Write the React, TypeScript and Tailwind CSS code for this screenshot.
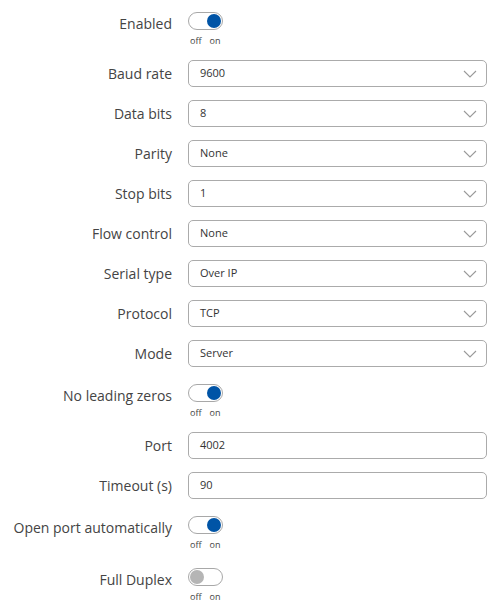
import { useState } from 'react';

type Row =
  | { kind: 'toggle'; label: string; on: boolean }
  | { kind: 'select'; label: string; value: string }
  | { kind: 'input'; label: string; value: string };

const rows: Row[] = [
  { kind: 'toggle', label: 'Enabled', on: true },
  { kind: 'select', label: 'Baud rate', value: '9600' },
  { kind: 'select', label: 'Data bits', value: '8' },
  { kind: 'select', label: 'Parity', value: 'None' },
  { kind: 'select', label: 'Stop bits', value: '1' },
  { kind: 'select', label: 'Flow control', value: 'None' },
  { kind: 'select', label: 'Serial type', value: 'Over IP' },
  { kind: 'select', label: 'Protocol', value: 'TCP' },
  { kind: 'select', label: 'Mode', value: 'Server' },
  { kind: 'toggle', label: 'No leading zeros', on: true },
  { kind: 'input', label: 'Port', value: '4002' },
  { kind: 'input', label: 'Timeout (s)', value: '90' },
  { kind: 'toggle', label: 'Open port automatically', on: true },
  { kind: 'toggle', label: 'Full Duplex', on: false },
];

function Toggle({ initial }: { initial: boolean }) {
  const [on, setOn] = useState(initial);
  return (
    <div className="flex flex-col pt-[4px]">
      <button
        type="button"
        onClick={() => setOn(!on)}
        className={`flex h-[18px] w-[35px] items-center rounded-full border border-[#a8a8a8] bg-white px-[1px] ${
          on ? 'justify-end' : 'justify-start'
        }`}
      >
        <span
          className={`block h-[14px] w-[14px] rounded-full ${on ? 'bg-[#0054a6]' : 'bg-[#b5b5b5]'}`}
        />
      </button>
      <div className="mt-[4px] flex h-[13px] items-center gap-[8px] pl-[2px] text-[9px] leading-none text-[#444]">
        <span>off</span>
        <span>on</span>
      </div>
    </div>
  );
}

function Chevron() {
  return (
    <svg width="14" height="8" viewBox="0 0 14 8" className="shrink-0">
      <path d="M1 1 L7 7 L13 1" fill="none" stroke="#999" strokeWidth="1.1" />
    </svg>
  );
}

export default function App() {
  return (
    <div
      className="min-h-screen w-[500px] bg-white pt-[8px] text-[#404040]"
      style={{ fontFamily: '"Open Sans", "Noto Sans", Arial, sans-serif' }}
    >
      <div className="flex flex-col gap-[13px]">
        {rows.map((r) => (
          <div key={r.label} className="flex items-start gap-[16px]">
            <div
              className={`w-[172px] shrink-0 text-right text-[14px] leading-[20px] text-[#444] ${
                r.kind === 'toggle' ? 'pt-[6px]' : 'pt-[4px]'
              }`}
            >
              {r.label}
            </div>
            {r.kind === 'toggle' && <Toggle initial={r.on} />}
            {r.kind === 'select' && (
              <div className="flex h-[27px] w-[299px] items-center justify-between rounded-[5px] border border-[#ababab] bg-white pl-[11px] pr-[9px] text-[11px] text-[#333]">
                <span>{r.value}</span>
                <Chevron />
              </div>
            )}
            {r.kind === 'input' && (
              <div className="flex h-[27px] w-[299px] items-center rounded-[5px] border border-[#ababab] bg-white pl-[11px] text-[11px] text-[#333]">
                {r.value}
              </div>
            )}
          </div>
        ))}
      </div>
    </div>
  );
}
